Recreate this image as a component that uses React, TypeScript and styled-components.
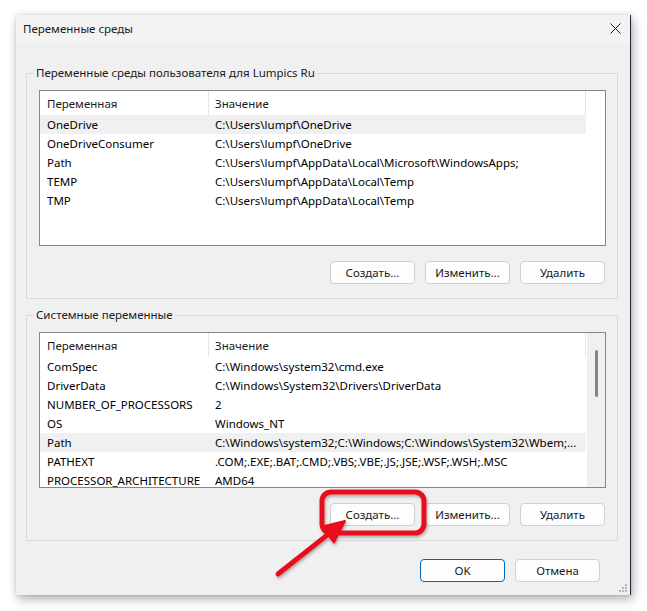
import React from "react";
import styled, { createGlobalStyle } from "styled-components";

const Global = createGlobalStyle`
  html, body { margin: 0; padding: 0; background: #ffffff; }
  body { font-family: "Noto Sans", "Open Sans", sans-serif; font-size: 11.5px; color: #1a1a1a; }
  * { box-sizing: border-box; }
`;

const Page = styled.div`
  position: relative;
  width: 647px;
  height: 611px;
  padding: 15px 0 0 16px;
  overflow: hidden;
`;

const Dialog = styled.div`
  position: relative;
  width: 615px;
  height: 580px;
  background: #f0f0f0;
  border-right: 1px solid #1e2638;
  box-shadow: 2px 4px 10px rgba(0, 0, 0, 0.32), 0 0 3px rgba(0, 0, 0, 0.12);
  display: flex;
  flex-direction: column;
`;

const TitleBar = styled.div`
  height: 28px;
  flex: none;
  display: flex;
  align-items: center;
  justify-content: space-between;
  padding: 0 5px 0 7px;
  background: #f3f3f3;
`;

const Title = styled.div`
  font-size: 11.5px;
  color: #1a1a1a;
  padding-bottom: 2px;
`;

const CloseBtn = styled.div`
  width: 20px;
  height: 20px;
  display: flex;
  align-items: center;
  justify-content: center;
  margin-top: -2px;
`;

const Body = styled.div`
  flex: none;
  display: flex;
  flex-direction: column;
  padding: 30px 12px 0 10px;
  gap: 16px;
`;

const Group = styled.div`
  position: relative;
  border: 1px solid #dadada;
  padding: 16px 11px 14px 12px;
  display: flex;
  flex-direction: column;
  gap: 15px;
`;

const Legend = styled.div`
  position: absolute;
  top: -9px;
  left: 7px;
  padding: 0 2px;
  background: #f0f0f0;
  font-size: 11.5px;
  line-height: 16px;
  color: #1a1a1a;
`;

const List = styled.div<{ $h: number }>`
  height: ${(p) => p.$h}px;
  border: 1px solid #828790;
  background: #ffffff;
  display: flex;
  overflow: hidden;
`;

const ListMain = styled.div`
  width: 546px;
  flex: none;
  display: flex;
  flex-direction: column;
`;

const Header = styled.div`
  height: 24px;
  flex: none;
  display: grid;
  grid-template-columns: 169px 377px;
`;

const HeadCell = styled.div<{ $pad: number }>`
  display: flex;
  align-items: center;
  padding-left: ${(p) => p.$pad}px;
  border-right: 1px solid #e5e5e5;
  color: #1a1a1a;
  white-space: nowrap;
`;

const Row = styled.div<{ $sel?: boolean }>`
  height: 19px;
  flex: none;
  display: grid;
  grid-template-columns: 169px 377px;
  align-items: center;
  background: ${(p) => (p.$sel ? "#f0f0f0" : "transparent")};
`;

const Cell = styled.div<{ $pad: number }>`
  padding-left: ${(p) => p.$pad}px;
  white-space: nowrap;
  overflow: hidden;
  color: #000000;
  line-height: 19px;
`;

const ScrollTrack = styled.div`
  flex: none;
  width: 18px;
  margin-left: 1px;
  background: #f0f0f0;
  display: flex;
  justify-content: center;
  padding-top: 17px;
`;

const Thumb = styled.div`
  width: 3px;
  height: 47px;
  border-radius: 2px;
  background: #858585;
`;

const Buttons = styled.div`
  display: flex;
  justify-content: flex-end;
  gap: 10px;
  padding-right: 1px;
`;

const Button = styled.button<{ $primary?: boolean }>`
  width: 85px;
  height: 23px;
  padding: 0 0 1px;
  border-radius: 4px;
  border: 1px solid ${(p) => (p.$primary ? "#0067c0" : "#d0d0d0")};
  background: #fdfdfd;
  font-family: "Noto Sans", "Open Sans", sans-serif;
  font-size: 11.5px;
  color: #1a1a1a;
  display: flex;
  align-items: center;
  justify-content: center;
  cursor: default;
`;

const Footer = styled.div`
  display: flex;
  justify-content: flex-end;
  gap: 10px;
  padding: 18px 30px 0 0;
`;

const Grip = styled.svg`
  position: absolute;
  right: 2px;
  bottom: 2px;
`;

const Overlay = styled.svg`
  position: absolute;
  left: 0;
  top: 0;
  pointer-events: none;
`;

type Var = [string, string, boolean?];

const userVars: Var[] = [
  ["OneDrive", "C:\\Users\\lumpf\\OneDrive", true],
  ["OneDriveConsumer", "C:\\Users\\lumpf\\OneDrive"],
  ["Path", "C:\\Users\\lumpf\\AppData\\Local\\Microsoft\\WindowsApps;"],
  ["TEMP", "C:\\Users\\lumpf\\AppData\\Local\\Temp"],
  ["TMP", "C:\\Users\\lumpf\\AppData\\Local\\Temp"],
];

const sysVars: Var[] = [
  ["ComSpec", "C:\\Windows\\system32\\cmd.exe"],
  ["DriverData", "C:\\Windows\\System32\\Drivers\\DriverData"],
  ["NUMBER_OF_PROCESSORS", "2"],
  ["OS", "Windows_NT"],
  ["Path", "C:\\Windows\\system32;C:\\Windows;C:\\Windows\\System32\\Wbem;...", true],
  ["PATHEXT", ".COM;.EXE;.BAT;.CMD;.VBS;.VBE;.JS;.JSE;.WSF;.WSH;.MSC"],
  ["PROCESSOR_ARCHITECTURE", "AMD64"],
];

function VarList({ vars, h, scroll }: { vars: Var[]; h: number; scroll?: boolean }) {
  return (
    <List $h={h}>
      <ListMain>
        <Header>
          <HeadCell $pad={7}>Переменная</HeadCell>
          <HeadCell $pad={6}>Значение</HeadCell>
        </Header>
        {vars.map(([n, v, s]) => (
          <Row key={n + v} $sel={s}>
            <Cell $pad={7}>{n}</Cell>
            <Cell $pad={6}>{v}</Cell>
          </Row>
        ))}
      </ListMain>
      {scroll && (
        <ScrollTrack>
          <Thumb />
        </ScrollTrack>
      )}
    </List>
  );
}

function GroupButtons() {
  return (
    <Buttons>
      <Button>Создать...</Button>
      <Button>Изменить...</Button>
      <Button>Удалить</Button>
    </Buttons>
  );
}

export default function App() {
  const tip = { x: 345, y: 521 };
  const tail = { x: 278, y: 574 };
  const dx = tip.x - tail.x;
  const dy = tip.y - tail.y;
  const len = Math.hypot(dx, dy);
  const ux = dx / len;
  const uy = dy / len;
  const nx = -uy;
  const ny = ux;
  const hl = 22;
  const hw = 10;
  const bx = tip.x - ux * hl;
  const by = tip.y - uy * hl;
  const head = `${tip.x},${tip.y} ${bx + nx * hw},${by + ny * hw} ${bx - nx * hw},${by - ny * hw}`;

  return (
    <Page>
      <Global />
      <Dialog>
        <TitleBar>
          <Title>Переменные среды</Title>
          <CloseBtn>
            <svg width="11" height="11" viewBox="0 0 11 11">
              <path d="M0.5 0.5 L10.5 10.5 M10.5 0.5 L0.5 10.5" stroke="#1a1a1a" strokeWidth="1" />
            </svg>
          </CloseBtn>
        </TitleBar>
        <Body>
          <Group>
            <Legend>Переменные среды пользователя для Lumpics Ru</Legend>
            <VarList vars={userVars} h={156} />
            <GroupButtons />
          </Group>
          <Group>
            <Legend>Системные переменные</Legend>
            <VarList vars={sysVars} h={156} scroll />
            <GroupButtons />
          </Group>
        </Body>
        <Footer>
          <Button $primary>OK</Button>
          <Button>Отмена</Button>
        </Footer>
        <Grip width="10" height="10" viewBox="0 0 10 10">
          {[
            [8, 2],
            [5, 5],
            [8, 5],
            [2, 8],
            [5, 8],
            [8, 8],
          ].map(([x, y]) => (
            <rect key={`${x}-${y}`} x={x - 1} y={y - 1} width="2" height="2" fill="#b5b5b5" />
          ))}
        </Grip>
      </Dialog>
      <Overlay width="647" height="611" viewBox="0 0 647 611">
        <defs>
          <filter id="sh" x="-20%" y="-20%" width="140%" height="140%">
            <feDropShadow dx="1" dy="2" stdDeviation="1.5" floodColor="#000" floodOpacity="0.3" />
          </filter>
        </defs>
        <g filter="url(#sh)">
          <rect x="322" y="492" width="102" height="41" rx="9" ry="9" fill="none" stroke="#e8101a" strokeWidth="5" />
          <line x1={tail.x} y1={tail.y} x2={bx + ux * 2} y2={by + uy * 2} stroke="#e8101a" strokeWidth="5" strokeLinecap="round" />
          <polygon points={head} fill="#e8101a" stroke="#e8101a" strokeWidth="2" strokeLinejoin="round" />
        </g>
      </Overlay>
    </Page>
  );
}
